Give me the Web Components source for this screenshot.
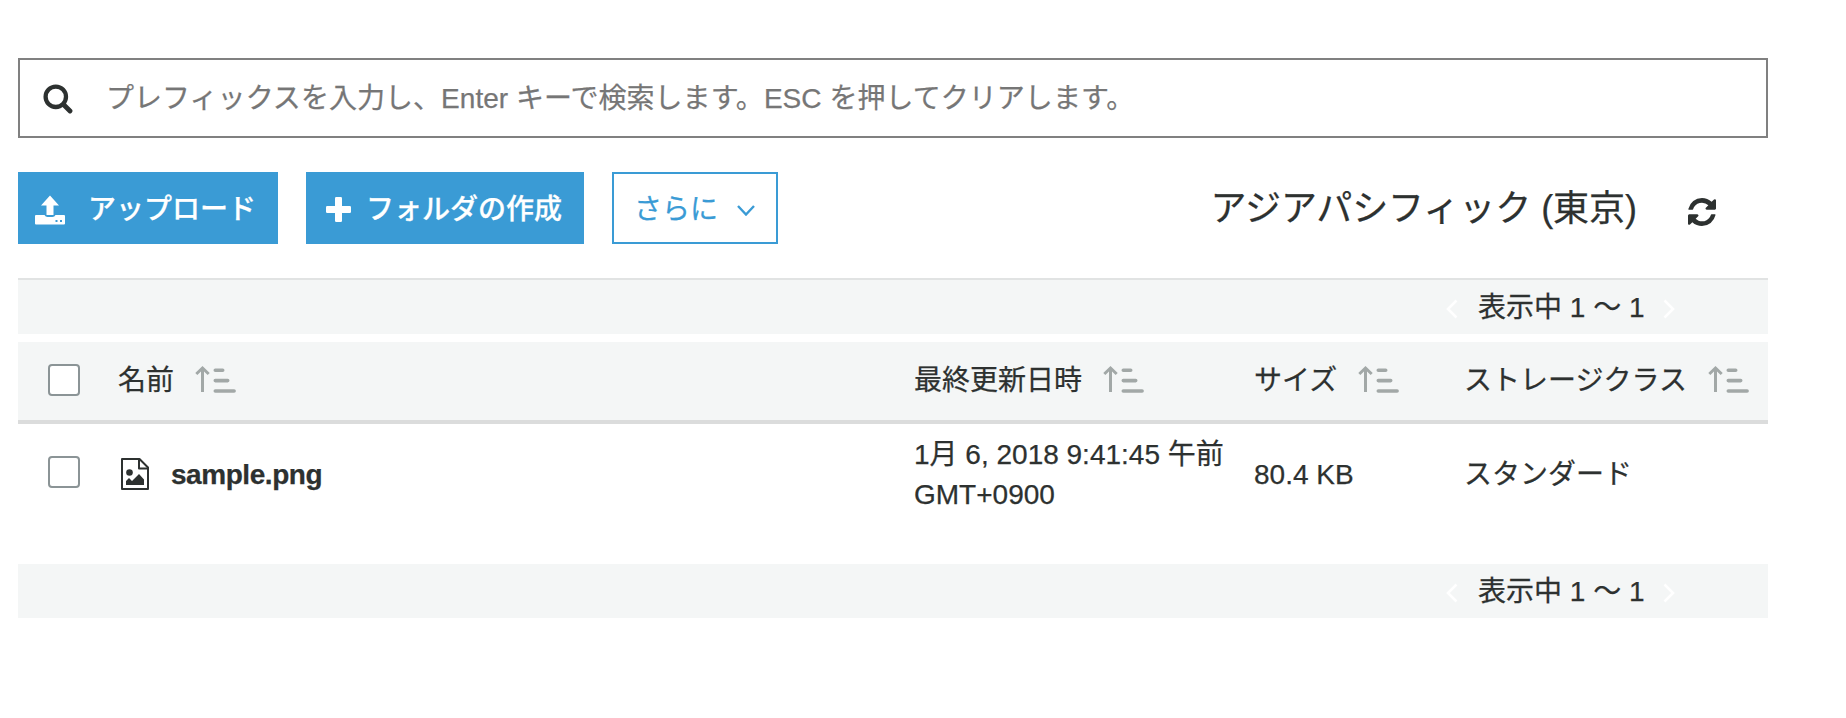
<!DOCTYPE html>
<html lang="ja"><head><meta charset="utf-8"><title>S3</title>
<style>
body{margin:0;background:#fff;color:#2d3130;font:28px/40px "Liberation Sans","Noto Sans CJK JP",sans-serif;-webkit-text-stroke:.25px;width:1846px;height:718px;overflow:hidden}
</style></head><body>
<bucket-browser></bucket-browser>
<script>
const define=(name,html)=>{
  const t=document.createElement('template');t.innerHTML=html;
  customElements.define(name,class extends HTMLElement{
    constructor(){super();this.attachShadow({mode:'open'}).append(t.content.cloneNode(true));}
  });
};
define('search-bar',`<style>
:host{display:flex;align-items:center;box-sizing:border-box;height:80px;border:2px solid #808080;color:#767676;padding:2px 0 0 23px}
svg{width:30px;height:30px;margin-right:33px;flex:none}
span{display:block;white-space:nowrap;letter-spacing:.04px}
</style><svg viewBox="0 0 30 30" fill="none" stroke="#2d3130"><circle cx="12.800" cy="12.800" r="10.200" stroke-width="4.300"/><path d="M20.500 20.500L27 27" stroke-width="4.800" stroke-linecap="round"/></svg><span><slot></slot></span>`);
define('action-button',`<style>
:host{display:flex;align-items:center;box-sizing:border-box;height:72px;background:#3a9bd5;color:#fff;border:2px solid #3a9bd5;white-space:nowrap;font-weight:500;padding-top:3px}
:host([outline]){background:#fff;color:#3a9bd5;font-weight:400}
::slotted(svg){flex:none;display:block}
</style><slot name="icon"></slot><slot></slot><slot name="end"></slot>`);
define('pager-bar',`<style>
:host{display:flex;align-items:center;justify-content:flex-end;box-sizing:border-box;height:54px;background:#f4f6f6;padding:2px 93px 0 0}
svg{width:12px;height:20px;margin-top:2px;fill:none;stroke:#fff;stroke-width:2.6}
span{display:block;margin:0 19px 0 20px;white-space:nowrap;width:166px}
</style><svg viewBox="0 0 12 20"><path d="M10.500 1.500L2 10l8.500 8.500"/></svg><span><slot></slot></span><svg viewBox="0 0 12 20"><path d="M1.500 1.500L10 10l-8.500 8.500"/></svg>`);
define('check-box',`<style>:host{display:block;box-sizing:border-box;width:32px;height:32px;margin-bottom:var(--lift,2px);border:2px solid #8b9496;border-radius:4px;background:#fff}</style>`);
define('sort-label',`<style>:host{display:flex;align-items:center;white-space:nowrap}
svg{width:41px;height:28px;margin:0 0 5px 21px;flex:none}</style><slot></slot><svg viewBox="0 0 41 28" fill="none" stroke="#a2a8a7"><path d="M1.300 9L7.500 3l6.200 6M7.500 3v24" stroke-width="3"/><path d="M20.300 5.300h7.400M20.300 15.600h12.400M20.300 26h18.800" stroke-width="3.600" stroke-linecap="round"/></svg>`);
define('grid-row',`<style>:host{--lift:6px;display:grid;grid-template-columns:70px 796px 340px 210px 1fr;align-items:center;padding:0 0 38px 30px;box-sizing:border-box;height:140px}
:host([head]){--lift:2px;height:82px;padding-bottom:0;background:#f4f6f6;border-bottom:4px solid #dbdcdc}
</style><slot></slot>`);
define('file-name',`<style>:host{display:flex;align-items:center;font-weight:700;letter-spacing:-.45px}svg{width:28px;height:32px;margin:0 22px 2px 3px}</style>
<svg viewBox="0 0 28 32" fill="none" stroke="#2d3130" stroke-width="2" stroke-linejoin="round"><path d="M1 1h17.500L27 9.500V31H1z"/><path d="M18 1v9.500h9"/><circle cx="8.500" cy="14.500" r="3.300" fill="#2d3130" stroke="none"/><path d="M5 27v-4l3-3 3 3 7-7 5 5.500V27z" fill="#2d3130" stroke="none"/></svg><slot></slot>`);
define('bucket-browser',`<style>
:host{display:block;width:1750px;padding:58px 0 0 18px}
.bar{display:flex;margin-top:34px;height:72px}
.up{width:260px;margin-right:28px;padding-left:15px}.new{width:278px;margin-right:28px;padding-left:18px}.more{width:166px;padding-left:20px}
.region{display:flex;align-items:center;margin-left:auto;padding:1px 52px 0 0;font-size:36px;letter-spacing:-.04px;white-space:nowrap}
.top{border-top:2px solid #e1e3e3;height:56px;margin:34px 0 8px}
</style>
<search-bar>プレフィックスを入力し、Enter キーで検索します。ESC を押してクリアします。</search-bar>
<div class="bar">
<action-button class="up"><svg slot="icon" style="margin-right:23px" width="30" height="30" viewBox="0 0 30 30" fill="#fff"><path d="M15 .5l9 10h-5.500V20h-7V10.500H6z"/><path d="M1 20h8.500q1 2 3 2h5q2 0 3-2H29q1 0 1 1v7.500q0 1-1 1H1q-1 0-1-1V21q0-1 1-1z"/><path d="M20.500 25h2v2h-2zM25 25h2v2h-2z" fill="#3a9bd5"/></svg>アップロード</action-button>
<action-button class="new"><svg slot="icon" style="margin-right:15px" width="25" height="25" viewBox="0 0 25 25" fill="#fff"><rect x="9" width="7" height="25" rx="1.200"/><rect y="9" width="25" height="7" rx="1.200"/></svg>フォルダの作成</action-button>
<action-button class="more" outline>さらに<svg slot="end" style="margin:2px 0 0 19px" width="18" height="11" viewBox="0 0 18 11" fill="none" stroke="#3a9bd5" stroke-width="2.400"><path d="M1 1l8 8.500L17 1"/></svg></action-button>
<div class="region">アジアパシフィック (東京)<svg style="margin:6px 0 0 51px" width="28" height="28" viewBox="0 0 1536 1536" fill="#2d3130"><path d="M1511 928q0 5-1 7-64 268-268 434.500T764 1536q-146 0-282.500-55T238 1324l-129 129q-19 19-45 19t-45-19-19-45V960q0-26 19-45t45-19h448q26 0 45 19t19 45-19 45l-137 137q71 66 161 102t187 36q134 0 250-65t186-179q11-17 53-117 8-23 30-23h192q13 0 22.500 9.500t9.500 22.500zm25-800v448q0 26-19 45t-45 19h-448q-26 0-45-19t-19-45 19-45l138-138Q969 256 768 256q-134 0-250 65T332 500q-11 17-53 117-8 23-30 23H50q-13 0-22.500-9.500T18 608v-7q65-268 270-434.500T768 0q146 0 284 55.500T1297 212l130-129q19-19 45-19t45 19 19 45z"/></svg></div>
</div>
<pager-bar class="top">表示中 1 ～ 1</pager-bar>
<grid-row head><check-box></check-box><sort-label>名前</sort-label><sort-label>最終更新日時</sort-label><sort-label>サイズ</sort-label><sort-label>ストレージクラス</sort-label></grid-row>
<grid-row><check-box></check-box><file-name>sample.png</file-name><div>1月 6, 2018 9:41:45 午前<br>GMT+0900</div><div>80.4 KB</div><div>スタンダード</div></grid-row>
<pager-bar>表示中 1 ～ 1</pager-bar>`);
</script></body></html>
